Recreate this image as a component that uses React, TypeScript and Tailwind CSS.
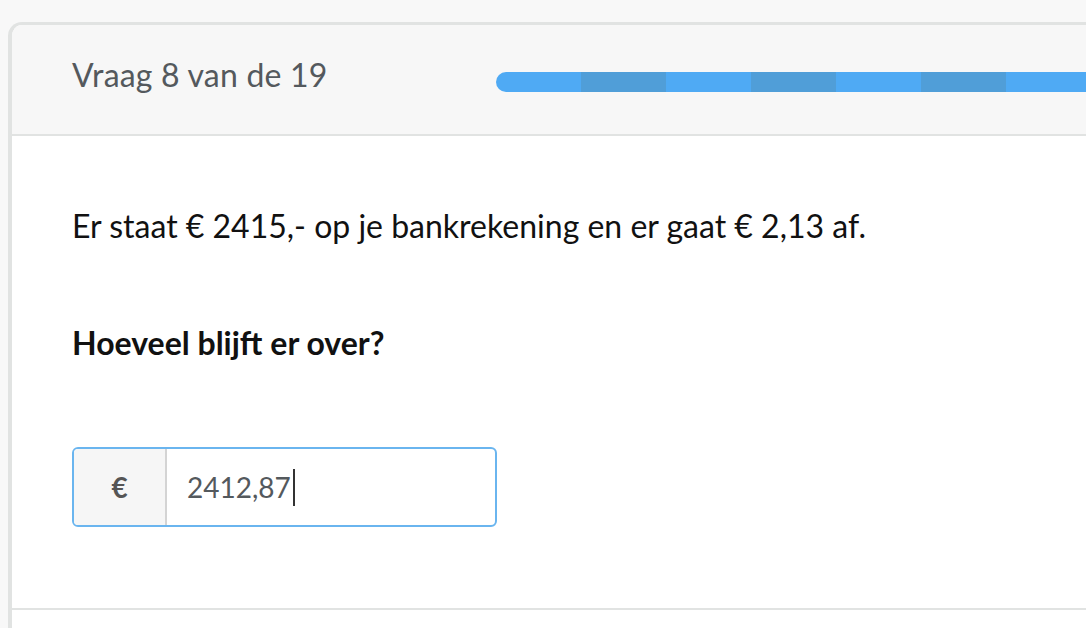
import React from "react";

export default function App() {
  const segs = [0, 1, 2, 3, 4, 5, 6, 7];
  return (
    <div
      className="w-[1086px] h-[628px] overflow-hidden bg-[#f8f8f8] pt-[22px] pl-[8px]"
      style={{ fontFamily: "Lato, 'Noto Sans', sans-serif" }}
    >
      <div className="w-[1200px] h-[700px] rounded-tl-[14px] border-t-[3px] border-l-[4px] border-[#e1e3e2] bg-white overflow-hidden">
        <div className="h-[111px] bg-[#f7f7f7] border-b-2 border-[#e1e3e2] flex items-start pl-[60px] pt-[30px]">
          <div className="w-[424px] h-[40px] leading-[40px] text-[32px] text-[#54595d] tracking-[0.2px]">
            Vraag 8 van de 19
          </div>
          <div className="flex mt-[17px] h-[20px] rounded-l-full overflow-hidden">
            {segs.map((i) => (
              <div
                key={i}
                className={
                  "h-[20px] w-[85px] " + (i % 2 === 1 ? "bg-[#509ed8]" : "bg-[#4faaf4]")
                }
              />
            ))}
          </div>
        </div>
        <div className="pl-[60px] pt-[70px]">
          <p className="h-[40px] leading-[40px] text-[32px] text-[#111]">
            Er staat € 2415,- op je bankrekening en er gaat € 2,13 af.
          </p>
          <p className="mt-[77px] h-[40px] leading-[40px] text-[32px] font-bold text-[#111]">
            Hoeveel blijft er over?
          </p>
          <div className="mt-[84px] w-[425px] h-[80px] flex rounded-[6px] border-2 border-[#6ab5ef] overflow-hidden">
            <div className="w-[93px] bg-[#f6f6f6] border-r-2 border-[#d4d4d4] flex items-center justify-center text-[28px] font-bold text-[#555]">
              €
            </div>
            <div className="flex-1 flex items-center pl-[20px] text-[28px] text-[#54595d]">
              <span>2412,87</span>
              <span className="ml-[2px] w-[2px] h-[37px] bg-[#333]" />
            </div>
          </div>
          <div className="h-[81px]" />
        </div>
        <div className="border-t-2 border-[#e1e3e2] h-[100px] bg-white" />
      </div>
    </div>
  );
}
